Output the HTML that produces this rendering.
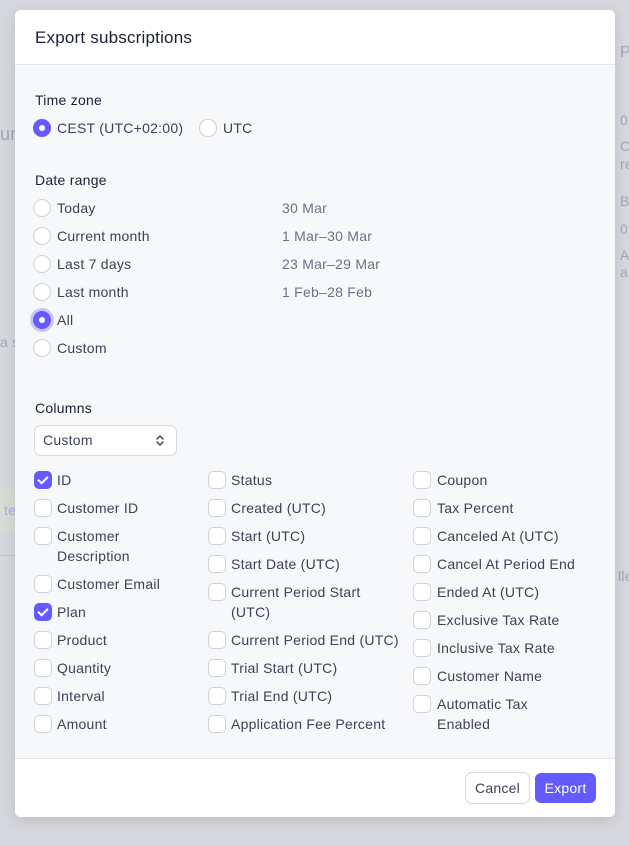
<!DOCTYPE html>
<html><head><meta charset="utf-8"><style>
*{box-sizing:border-box;margin:0;padding:0}
body{width:629px;height:846px;background:#d6d8de;font-family:"Liberation Sans",sans-serif;font-size:14px;letter-spacing:.25px;color:#3c4257;position:relative;overflow:hidden}
.bg{position:absolute;color:#a3a7b3;font-size:14px}
.modal{position:absolute;left:15px;top:10px;width:600px;height:807px;background:#f6f8fa;border-radius:6px;overflow:hidden;box-shadow:0 4px 14px rgba(0,0,0,.12)}
.hd{position:absolute;left:0;top:0;width:600px;height:55px;background:#fff;border-bottom:1px solid #e3e8ee}
.hd span{position:absolute;left:20px;top:18px;font-size:17px;letter-spacing:.2px;color:#1a1f36}
.ft{position:absolute;left:0;top:748px;width:600px;height:59px;background:#fff;border-top:1px solid #e3e8ee}
.a{position:absolute;white-space:nowrap;line-height:20px}
.lbl{color:#1a1f36}
.r{position:absolute;width:16px;height:16px;border-radius:50%;background:#fff;box-shadow:0 0 0 1px #cfd3da,0 1px 1px rgba(0,0,0,.08)}
.r.on{background:#635bff;box-shadow:0 0 0 1px #635bff}
.r.on::after{content:"";position:absolute;left:5px;top:5px;width:6px;height:6px;border-radius:50%;background:#fff}
.c{position:absolute;width:16px;height:16px;border-radius:4px;background:#fff;box-shadow:0 0 0 1px #cfd3da,0 1px 1px rgba(0,0,0,.08)}
.c.on{background:#635bff;box-shadow:0 0 0 1px #635bff}
.c.on::after{content:"";position:absolute;left:5px;top:2px;width:4px;height:8px;border:solid #fff;border-width:0 2px 2px 0;transform:rotate(45deg)}
.g{color:#697386}
.btn{position:absolute;top:14px;height:30px;border-radius:6px;font-size:14px;line-height:30px;text-align:center}
</style></head><body>
<div class="bg" style="left:620px;top:44px;font-size:16px">P</div>
<div class="bg" style="left:0;top:124px;font-size:18px">ur</div>
<div class="bg" style="left:0;top:334px">a s</div>
<div style="position:absolute;left:0;top:490px;width:15px;height:42px;background:#d9dcd6"></div>
<div class="bg" style="left:4px;top:502px;color:#a6aee6">te</div>
<div style="position:absolute;left:0;top:555px;width:15px;height:1px;background:#b8bde8"></div>
<div class="bg" style="left:620px;top:112px">0</div>
<div class="bg" style="left:620px;top:138px">C</div>
<div class="bg" style="left:620px;top:156px">re</div>
<div class="bg" style="left:620px;top:193px">B</div>
<div class="bg" style="left:620px;top:221px">0</div>
<div class="bg" style="left:620px;top:247px">A</div>
<div class="bg" style="left:620px;top:264px">a</div>
<div class="bg" style="left:618px;top:568px">lle</div>
<div class="modal">
<div class="hd"><span>Export subscriptions</span></div>
<div class="a lbl" style="left:20px;top:80px">Time zone</div>
<div class="r on" style="left:19px;top:110px"></div><div class="a" style="left:42px;top:108px">CEST (UTC+02:00)</div>
<div class="r" style="left:185px;top:110px"></div><div class="a" style="left:208px;top:108px">UTC</div>
<div class="a lbl" style="left:20px;top:160px">Date range</div>
<div class="r" style="left:19px;top:190px"></div><div class="a" style="left:42px;top:188px">Today</div><div class="a g" style="left:267px;top:188px">30 Mar</div>
<div class="r" style="left:19px;top:218px"></div><div class="a" style="left:42px;top:216px">Current month</div><div class="a g" style="left:267px;top:216px">1 Mar–30 Mar</div>
<div class="r" style="left:19px;top:246px"></div><div class="a" style="left:42px;top:244px">Last 7 days</div><div class="a g" style="left:267px;top:244px">23 Mar–29 Mar</div>
<div class="r" style="left:19px;top:274px"></div><div class="a" style="left:42px;top:272px">Last month</div><div class="a g" style="left:267px;top:272px">1 Feb–28 Feb</div>
<div class="r on" style="left:19px;top:302px;box-shadow:0 0 0 1px #635bff,0 0 0 4px rgba(99,91,255,.3)"></div><div class="a" style="left:42px;top:300px">All</div>
<div class="r" style="left:19px;top:330px"></div><div class="a" style="left:42px;top:328px">Custom</div>
<div class="a lbl" style="left:20px;top:388px">Columns</div>
<div style="position:absolute;left:20px;top:416px;width:141px;height:29px;background:#fff;border-radius:6px;box-shadow:0 0 0 1px #d5d9e0,0 1px 2px rgba(0,0,0,.06)">
<span class="a" style="left:8px;top:4px">Custom</span>
<svg style="position:absolute;left:120px;top:8px" width="10" height="13" viewBox="0 0 10 13"><path d="M2 5 L5 2 L8 5 M2 8 L5 11 L8 8" fill="none" stroke="#3c4257" stroke-width="1.5" stroke-linecap="round" stroke-linejoin="round"/></svg>
</div>
<div class="c on" style="left:20px;top:462px"></div><div class="a" style="left:42px;top:460px">ID</div>
<div class="c" style="left:20px;top:490px"></div><div class="a" style="left:42px;top:488px">Customer ID</div>
<div class="c" style="left:20px;top:518px"></div><div class="a" style="left:42px;top:516px">Customer<br>Description</div>
<div class="c" style="left:20px;top:566px"></div><div class="a" style="left:42px;top:564px">Customer Email</div>
<div class="c on" style="left:20px;top:594px"></div><div class="a" style="left:42px;top:592px">Plan</div>
<div class="c" style="left:20px;top:622px"></div><div class="a" style="left:42px;top:620px">Product</div>
<div class="c" style="left:20px;top:650px"></div><div class="a" style="left:42px;top:648px">Quantity</div>
<div class="c" style="left:20px;top:678px"></div><div class="a" style="left:42px;top:676px">Interval</div>
<div class="c" style="left:20px;top:706px"></div><div class="a" style="left:42px;top:704px">Amount</div>
<div class="c" style="left:194px;top:462px"></div><div class="a" style="left:216px;top:460px">Status</div>
<div class="c" style="left:194px;top:490px"></div><div class="a" style="left:216px;top:488px">Created (UTC)</div>
<div class="c" style="left:194px;top:518px"></div><div class="a" style="left:216px;top:516px">Start (UTC)</div>
<div class="c" style="left:194px;top:546px"></div><div class="a" style="left:216px;top:544px">Start Date (UTC)</div>
<div class="c" style="left:194px;top:574px"></div><div class="a" style="left:216px;top:572px">Current Period Start<br>(UTC)</div>
<div class="c" style="left:194px;top:622px"></div><div class="a" style="left:216px;top:620px">Current Period End (UTC)</div>
<div class="c" style="left:194px;top:650px"></div><div class="a" style="left:216px;top:648px">Trial Start (UTC)</div>
<div class="c" style="left:194px;top:678px"></div><div class="a" style="left:216px;top:676px">Trial End (UTC)</div>
<div class="c" style="left:194px;top:706px"></div><div class="a" style="left:216px;top:704px">Application Fee Percent</div>
<div class="c" style="left:399px;top:462px"></div><div class="a" style="left:422px;top:460px">Coupon</div>
<div class="c" style="left:399px;top:490px"></div><div class="a" style="left:422px;top:488px">Tax Percent</div>
<div class="c" style="left:399px;top:518px"></div><div class="a" style="left:422px;top:516px">Canceled At (UTC)</div>
<div class="c" style="left:399px;top:546px"></div><div class="a" style="left:422px;top:544px">Cancel At Period End</div>
<div class="c" style="left:399px;top:574px"></div><div class="a" style="left:422px;top:572px">Ended At (UTC)</div>
<div class="c" style="left:399px;top:602px"></div><div class="a" style="left:422px;top:600px">Exclusive Tax Rate</div>
<div class="c" style="left:399px;top:630px"></div><div class="a" style="left:422px;top:628px">Inclusive Tax Rate</div>
<div class="c" style="left:399px;top:658px"></div><div class="a" style="left:422px;top:656px">Customer Name</div>
<div class="c" style="left:399px;top:686px"></div><div class="a" style="left:422px;top:684px">Automatic Tax<br>Enabled</div>
<div class="ft">
<div class="btn" style="left:451px;width:63px;background:#fff;box-shadow:0 0 0 1px #d5d9e0,0 1px 2px rgba(0,0,0,.08);color:#3c4257">Cancel</div>
<div class="btn" style="left:520px;width:61px;background:#635bff;color:#fff">Export</div>
</div>
</div>
</body></html>
